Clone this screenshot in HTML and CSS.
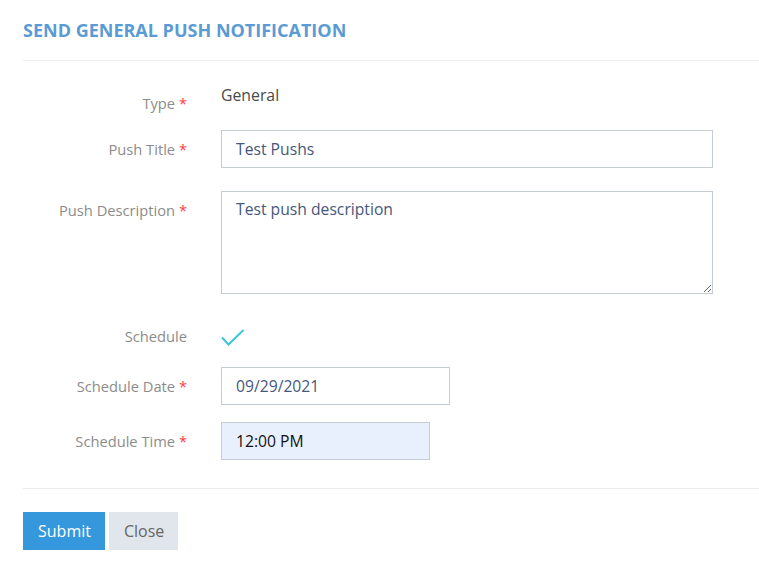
FILE: index.html
```html
<!DOCTYPE html>
<html>
<head>
<meta charset="utf-8">
<link rel="stylesheet" href="styles.css">
</head>
<body>
<div class="modal">
  <div class="modal-header">
    <h2 class="title">SEND GENERAL PUSH NOTIFICATION</h2>
  </div>
  <form class="modal-body">
    <div class="row row-type">
      <label class="label">Type <span class="req">*</span></label>
      <div class="static">General</div>
    </div>
    <div class="row row-title">
      <label class="label">Push Title <span class="req">*</span></label>
      <input class="input input-wide" type="text" value="Test Pushs">
    </div>
    <div class="row row-desc">
      <label class="label">Push Description <span class="req">*</span></label>
      <textarea class="input textarea">Test push description</textarea>
    </div>
    <div class="row row-schedule">
      <label class="label">Schedule</label>
      <div class="check">
        <svg width="24" height="18" viewBox="0 0 24 18"><path d="M1 8.5 L7.5 15.5 L22.5 1" fill="none" stroke="#3fc6d6" stroke-width="2"/></svg>
      </div>
    </div>
    <div class="row row-date">
      <label class="label">Schedule Date <span class="req">*</span></label>
      <input class="input input-date" type="text" value="09/29/2021">
    </div>
    <div class="row row-time">
      <label class="label">Schedule Time <span class="req">*</span></label>
      <input class="input input-time" type="text" value="12:00 PM">
    </div>
  </form>
  <div class="modal-footer">
    <button class="btn btn-primary" type="button">Submit</button><button class="btn btn-secondary" type="button">Close</button>
  </div>
</div>
</body>
</html>
```
FILE: styles.css
```css
* { box-sizing: border-box; }
html, body { margin: 0; padding: 0; background: #fff; }
body { font-family: "Open Sans", "Noto Sans", sans-serif; }
.modal { padding-left: 23px; }
.modal-header {
  height: 61px;
  border-bottom: 1px solid #eceef1;
  padding-top: 18px;
}
.title {
  margin: 0;
  font-size: 18px;
  font-weight: 700;
  color: #5b9bd5;
  line-height: 24px;
  letter-spacing: 0;
}
.modal-body { padding-top: 23px; padding-bottom: 28px; border-bottom: 1px solid #e9edf1; }
.row {
  display: grid;
  grid-template-columns: 164px 1fr;
  column-gap: 34px;
  align-items: start;
}
.row-type { margin-bottom: 8px; }
.row-title { margin-bottom: 23px; }
.row-desc { margin-bottom: 23px; }
.row-schedule { margin-bottom: 12px; }
.row-date { margin-bottom: 17px; }
.label {
  text-align: right;
  font-size: 14.7px;
  line-height: 38px;
  height: 38px;
  color: #8c8c8c;
  white-space: nowrap;
}
.req { color: #ff4040; }
.static {
  font-size: 15.8px;
  line-height: 22px;
  color: #4a4a4a;
}
.input {
  display: block;
  height: 38px;
  border: 1px solid #c6ccd6;
  border-radius: 0;
  padding: 0 14px;
  font-family: "Open Sans", "Noto Sans", sans-serif;
  font-size: 15.7px;
  color: #45587a;
  background: #fff;
  outline: none;
  margin: 0;
}
.input-wide { width: 492px; }
.textarea {
  width: 492px;
  height: 103px;
  padding-top: 6px;
  line-height: 22px;
  resize: vertical;
}
.input-date { width: 229px; }
.input-time { width: 209px; background: #e8f0fe; color: #111; }
.check { padding-top: 12px; height: 38px; }
.check svg { display: block; }
.modal-footer { padding-top: 23px; }
.btn {
  height: 38px;
  border: none;
  border-radius: 0;
  font-family: "Open Sans", "Noto Sans", sans-serif;
  font-size: 16px;
  padding: 0 15px;
  cursor: pointer;
  vertical-align: top;
}
.btn-primary { background: #3598dc; color: #fff; width: 82px; }
.btn-secondary { background: #e1e5ec; color: #666; margin-left: 4px; width: 69px; }
```
